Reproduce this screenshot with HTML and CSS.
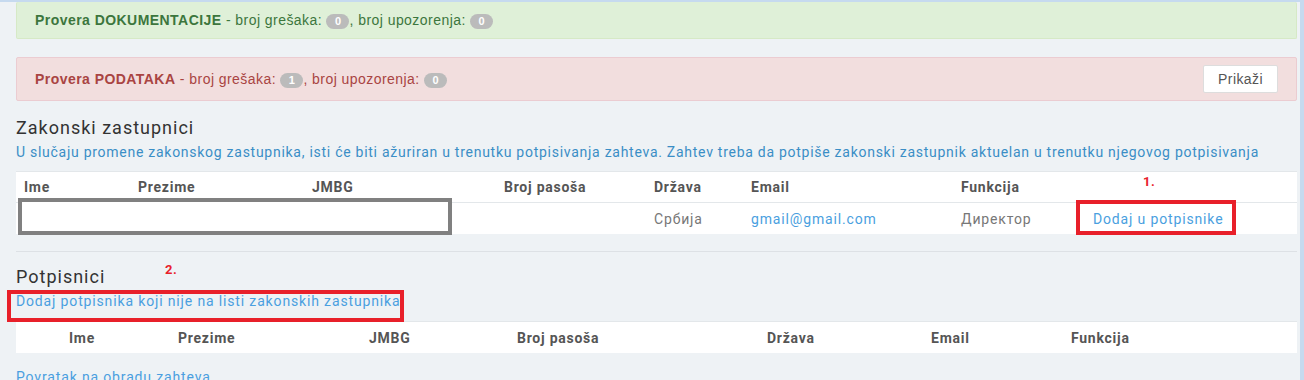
FILE: index.html
```html
<!DOCTYPE html>
<html>
<head>
    <title>Potpisnici zahteva</title>
    <link rel="stylesheet" href="styles.css">
</head>
<body>
    <div class="page">
        <div class="alert alert-success">
            <span><b>Provera DOKUMENTACIJE</b> - broj grešaka: <span class="badge">0</span>, broj upozorenja: <span class="badge">0</span></span>
        </div>

        <div class="alert alert-danger">
            <span><b>Provera PODATAKA</b> - broj grešaka: <span class="badge">1</span>, broj upozorenja: <span class="badge">0</span></span>
            <button class="btn">Prikaži</button>
        </div>

        <h3>Zakonski zastupnici</h3>
        <p class="info">U slučaju promene zakonskog zastupnika, isti će biti ažuriran u trenutku potpisivanja zahteva. Zahtev treba da potpiše zakonski zastupnik aktuelan u trenutku njegovog potpisivanja</p>

        <div class="table-wrap">
            <table class="grid reps">
                <thead>
                    <tr>
                        <th class="c1">Ime</th>
                        <th class="c2">Prezime</th>
                        <th class="c3">JMBG</th>
                        <th class="c4">Broj pasoša</th>
                        <th class="c5">Država</th>
                        <th class="c6">Email</th>
                        <th class="c7">Funkcija</th>
                        <th></th>
                    </tr>
                </thead>
                <tbody>
                    <tr>
                        <td></td>
                        <td></td>
                        <td></td>
                        <td></td>
                        <td>Србија</td>
                        <td><a href="#">gmail@gmail.com</a></td>
                        <td>Директор</td>
                        <td><a href="#">Dodaj u potpisnike</a></td>
                    </tr>
                </tbody>
            </table>
            <!-- annotations over the screenshot -->
            <div class="redacted"></div>
            <div class="mark mark-1">1.</div>
            <div class="box box-1"></div>
        </div>

        <hr>

        <div class="signers">
            <h3>Potpisnici</h3>
            <div class="mark mark-2">2.</div>
            <a href="#" class="add-link">Dodaj potpisnika koji nije na listi zakonskih zastupnika</a>
            <div class="box box-2"></div>
        </div>

        <table class="grid empty">
            <thead>
                <tr>
                    <th class="e1">Ime</th>
                    <th class="e2">Prezime</th>
                    <th class="e3">JMBG</th>
                    <th class="e4">Broj pasoša</th>
                    <th class="e5">Država</th>
                    <th class="e6">Email</th>
                    <th class="e7">Funkcija</th>
                    <th></th>
                </tr>
            </thead>
        </table>

        <a href="#" class="back">Povratak na obradu zahteva</a>
    </div>
</body>
</html>
```

FILE: styles.css
```css
body {
    margin: 0;
    background: #eef2f5;
    border-top: 2px solid #c6daef;
    border-right: 4px solid #c6daef;
    font-family: Roboto, Arial, sans-serif;
    font-size: 14px;
    letter-spacing: 0.85px;
    color: #555;
    overflow: hidden;
}
.page {
    padding: 0 3px 0 16px;
}
.alert {
    font-family: "Liberation Sans", Arial, sans-serif;
    font-size: 14px;
    letter-spacing: 0.45px;
    border-radius: 2px;
    display: flex;
    align-items: center;
    justify-content: space-between;
    padding: 0 18px;
    border: 1px solid transparent;
}
.alert-success {
    background: #dff0d8;
    border-color: #d6e9c6;
    color: #3c763d;
    height: 36px;
    border-top: none;
}
.alert-danger {
    background: #f2dede;
    border-color: #ebccd1;
    color: #a94442;
    height: 42px;
    margin-top: 18px;
}
.badge {
    display: inline-block;
    background: #bbb;
    color: #fff;
    font-weight: bold;
    font-size: 11px;
    letter-spacing: 0;
    line-height: 15px;
    min-width: 9px;
    padding: 0 7px;
    border-radius: 8px;
    text-align: center;
}
.btn {
    font-family: "Liberation Sans", Arial, sans-serif;
    font-size: 14px;
    letter-spacing: 0.4px;
    color: #555;
    background: #fff;
    border: 1px solid #ddd;
    border-radius: 2px;
    width: 75px;
    height: 28px;
}
h3 {
    font-size: 18px;
    font-weight: 400;
    letter-spacing: 1px;
    color: #333;
    margin: 16px 0 0;
    line-height: 22px;
}
.info {
    color: #3a8ec6;
    margin: 4px 0 0;
    font-size: 14px;
    letter-spacing: 0.73px;
    line-height: 18px;
    white-space: nowrap;
}
a {
    color: #4a9fe0;
    text-decoration: none;
}
.table-wrap {
    position: relative;
    margin-top: 10px;
}
.grid {
    width: 100%;
    border-collapse: collapse;
    background: #fff;
    border-top: 1px solid #e3e7ea;
}
.grid th {
    text-align: left;
    font-weight: bold;
    letter-spacing: 0.75px;
    color: #555;
    padding: 0 8px;
    height: 30px;
    border-bottom: 1px solid #e3e7ea;
}
.grid td {
    padding: 0 8px;
    height: 31px;
    color: #777;
}
.reps .c1 { width: 98px; }
.reps .c2 { width: 158px; }
.reps .c3 { width: 176px; }
.reps .c4 { width: 134px; }
.reps .c5 { width: 81px; }
.reps .c6 { width: 194px; }
.reps .c7 { width: 115px; }
.reps td:last-child { padding-left: 9px; }
.empty th { border-bottom: none; height: 31px; }
.empty .e1 { width: 93px; padding-left: 53px; }
.empty .e2 { width: 175px; }
.empty .e3 { width: 132px; }
.empty .e4 { width: 234px; }
.empty .e5 { width: 148px; }
.empty .e6 { width: 124px; }
.redacted {
    position: absolute;
    left: 2px;
    top: 27px;
    width: 426px;
    height: 29px;
    border: 4px solid #808080;
    background: #fff;
}
.mark {
    position: absolute;
    color: #e8202a;
    font-weight: bold;
    font-size: 13px;
    letter-spacing: 0.5px;
}
.mark-1 { left: 1127px; top: 3px; }
.box {
    position: absolute;
    border: 4px solid #e8202a;
}
.box-1 {
    left: 1060px;
    top: 29px;
    width: 152px;
    height: 27px;
}
hr {
    border: none;
    border-top: 1px solid #dde1e5;
    margin: 17px 0 0;
}
.signers {
    position: relative;
    padding: 14px 0 12px;
}
.signers h3 { margin-top: 0; }
.mark-2 { left: 149px; top: 10px; }
.add-link {
    display: inline-block;
    margin-top: 5px;
    font-size: 14px;
}
.box-2 {
    left: -9px;
    top: 38px;
    width: 389px;
    height: 24px;
}
.back {
    display: block;
    margin-top: 16px;
}
```
